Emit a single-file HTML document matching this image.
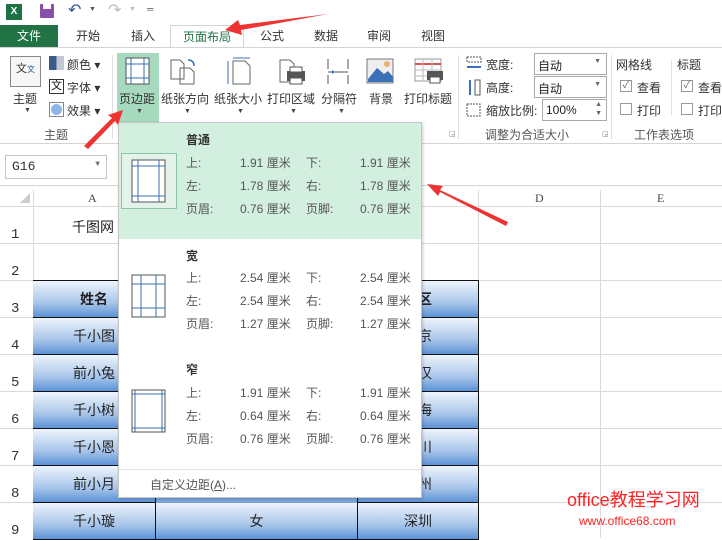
<!DOCTYPE html>
<html><head><meta charset="utf-8"><style>
*{margin:0;padding:0;box-sizing:border-box}
body{width:722px;height:538px;overflow:hidden;background:#fff;font-family:"Liberation Sans","Noto Sans CJK SC",sans-serif;font-size:12px;color:#444;position:relative}
.a{position:absolute;white-space:nowrap}
.tab{position:absolute;top:25px;height:23px;line-height:23px;font-size:12px;color:#333;text-align:center}
.lbl{font-size:12px;color:#333}
.cell{position:absolute;height:37px;border-right:1px solid #111;border-bottom:1px solid #111;background:linear-gradient(#eef4fc,#a9c6ea 60%,#5d92d6);font-size:14px;color:#222;text-align:center;line-height:36px}
.rn{position:absolute;left:0;width:33px;text-align:left;padding-left:11px;font-size:14px;color:#333;font-family:"Liberation Mono",monospace}
.hl{position:absolute;left:0;width:722px;height:1px;background:#dadada}
.vl{position:absolute;top:190px;width:1px;height:348px;background:#dadada}
.dd td{font-size:12px;color:#555}
.m{position:absolute;font-size:12px;color:#555}
</style></head><body>
<!-- title bar -->
<div class="a" style="left:6px;top:4px;width:16px;height:16px;background:#1e7145;color:#fff;font-size:10px;font-weight:bold;line-height:16px;text-align:center">X</div>
<div class="a" style="left:40px;top:4px;width:14px;height:14px;background:#8a4fa8;border-radius:1px"></div>
<div class="a" style="left:43px;top:4px;width:8px;height:5px;background:#fff"></div>
<div class="a" style="left:68px;top:0px;font-size:16px;color:#2b5797">↶</div><div class="a" style="left:89px;top:6px;font-size:7px;color:#555">▼</div>
<div class="a" style="left:108px;top:0px;font-size:16px;color:#bbb">↷</div><div class="a" style="left:129px;top:6px;font-size:7px;color:#bbb">▼</div>
<div class="a" style="left:147px;top:4px;font-size:9px;color:#555">═</div>
<!-- tabs -->
<div class="tab" style="left:0;width:58px;background:#217346;color:#fff">文件</div>
<div class="tab" style="left:72px;width:32px">开始</div>
<div class="tab" style="left:127px;width:32px">插入</div>
<div class="tab" style="left:170px;width:74px;top:25px;height:23px;border:1px solid #d4d4d4;border-bottom:none;background:#fff;color:#217346">页面布局</div>
<div class="tab" style="left:256px;width:32px">公式</div>
<div class="tab" style="left:310px;width:32px">数据</div>
<div class="tab" style="left:363px;width:32px">审阅</div>
<div class="tab" style="left:417px;width:32px">视图</div>
<div class="a" style="left:0;top:47px;width:722px;height:1px;background:#d4d4d4"></div>
<div class="a" style="left:0;top:47px;width:170px;height:1px;background:#d4d4d4"></div>
<!-- ribbon -->
<div class="a" style="left:10px;top:56px;width:31px;height:31px;border:1px solid #888;background:#f6f6f6;font-size:11px;text-align:center;line-height:24px;color:#333">文<span style="font-size:8px;color:#2b5797">文</span></div>
<div class="a lbl" style="left:13px;top:90px">主题</div><div class="a" style="left:24px;top:107px;font-size:7px">▼</div>
<div class="a" style="left:49px;top:56px;width:15px;height:14px;background:linear-gradient(90deg,#3a5a8a 50%,#c1c8d1 50%)"></div>
<div class="a lbl" style="left:67px;top:56px">颜色 ▾</div>
<div class="a" style="left:49px;top:79px;width:15px;height:15px;border:1px solid #333;font-size:11px;line-height:13px;text-align:center;color:#111">文</div>
<div class="a lbl" style="left:67px;top:79px">字体 ▾</div>
<div class="a" style="left:49px;top:102px;width:15px;height:15px;border:1px solid #888;background:#fff"><div style="margin:1px;width:11px;height:11px;border-radius:50%;background:#8fb6e8"></div></div>
<div class="a lbl" style="left:67px;top:102px">效果 ▾</div>
<div class="a lbl" style="left:44px;top:126px;color:#555">主题</div>
<div class="a" style="left:112px;top:55px;width:1px;height:84px;background:#e0e0e0"></div>
<div class="a" style="left:117px;top:53px;width:42px;height:69px;background:#a6d9bd"></div>
<svg class="a" style="left:124px;top:57px" width="28" height="28"><rect x="2" y="1" width="23" height="26" fill="#fff" stroke="#555"/><path d="M7 1V27M20 1V27M2 7H25M2 21H25" stroke="#3b6fb6"/></svg>
<div class="a lbl" style="left:119px;top:90px">页边距</div><div class="a" style="left:136px;top:108px;font-size:7px">▼</div>
<svg class="a" style="left:168px;top:57px" width="32" height="28"><path d="M3 3H12L16 7V22H3Z M12 11H22L26 15V27H12Z" fill="#fff" stroke="#666"/><path d="M20 3Q26 3 26 9" stroke="#3b6fb6" fill="none" stroke-width="1.5"/></svg>
<div class="a lbl" style="left:161px;top:90px">纸张方向</div><div class="a" style="left:184px;top:108px;font-size:7px">▼</div>
<svg class="a" style="left:225px;top:57px" width="28" height="28"><path d="M8 4H20L25 9V27H8Z" fill="#fff" stroke="#666"/><path d="M3 4V27M8 1H25" stroke="#3b6fb6"/></svg>
<div class="a lbl" style="left:214px;top:90px">纸张大小</div><div class="a" style="left:237px;top:108px;font-size:7px">▼</div>
<svg class="a" style="left:277px;top:57px" width="30" height="28"><path d="M3 3H13L17 7V25H3Z" fill="#fff" stroke="#666"/><rect x="10" y="14" width="18" height="10" fill="#555"/><rect x="13" y="10" width="12" height="5" fill="#fff" stroke="#555"/><rect x="13" y="21" width="12" height="6" fill="#fff" stroke="#555"/></svg>
<div class="a lbl" style="left:267px;top:90px">打印区域</div><div class="a" style="left:290px;top:108px;font-size:7px">▼</div>
<svg class="a" style="left:324px;top:57px" width="28" height="28"><path d="M4 2V12M24 2V12M4 18V27M24 18V27M4 15H24" stroke="#555"/><path d="M8 13L11 15L8 17Z" fill="#3b6fb6"/></svg>
<div class="a lbl" style="left:321px;top:90px">分隔符</div><div class="a" style="left:338px;top:108px;font-size:7px">▼</div>
<svg class="a" style="left:366px;top:57px" width="28" height="28"><rect x="1" y="2" width="26" height="24" fill="#eee" stroke="#777"/><path d="M2 22L11 11L18 17L22 14L27 20V25H2Z" fill="#3b6fb6"/><circle cx="21" cy="7" r="3" fill="#e8b36b"/></svg>
<div class="a lbl" style="left:369px;top:90px">背景</div>
<svg class="a" style="left:413px;top:57px" width="32" height="28"><rect x="2" y="2" width="26" height="22" fill="#fff" stroke="#999"/><path d="M2 7H28" stroke="#d9534f" stroke-width="2"/><path d="M10 2V24M19 2V24M2 13H28M2 19H28" stroke="#bbb"/><rect x="14" y="14" width="16" height="9" fill="#555"/><rect x="17" y="20" width="10" height="6" fill="#fff" stroke="#555"/></svg>
<div class="a lbl" style="left:404px;top:90px">打印标题</div>
<div class="a" style="left:449px;top:130px;font-size:7px;color:#777">◲</div>
<div class="a" style="left:458px;top:55px;width:1px;height:84px;background:#e0e0e0"></div>
<svg class="a" style="left:466px;top:56px" width="16" height="16"><rect x="1" y="1" width="14" height="5" fill="#fff" stroke="#555" stroke-dasharray="2 1"/><path d="M1 11H15" stroke="#3b6fb6" stroke-width="2"/></svg>
<div class="a lbl" style="left:486px;top:56px">宽度:</div>
<svg class="a" style="left:466px;top:79px" width="16" height="17"><rect x="9" y="1" width="5" height="15" fill="#fff" stroke="#555"/><path d="M4 1V16" stroke="#3b6fb6" stroke-width="2"/></svg>
<div class="a lbl" style="left:486px;top:79px">高度:</div>
<svg class="a" style="left:466px;top:103px" width="16" height="14"><rect x="1" y="1" width="13" height="12" fill="#fff" stroke="#555" stroke-dasharray="2 1"/></svg>
<div class="a lbl" style="left:486px;top:102px">缩放比例:</div>
<div class="a" style="left:534px;top:53px;width:73px;height:22px;border:1px solid #aaa;font-size:12px;color:#222;padding:3px 3px">自动<span style="position:absolute;right:5px;top:4px;font-size:7px;color:#666">▼</span></div>
<div class="a" style="left:534px;top:76px;width:73px;height:22px;border:1px solid #aaa;font-size:12px;color:#222;padding:3px 3px">自动<span style="position:absolute;right:5px;top:4px;font-size:7px;color:#666">▼</span></div>
<div class="a" style="left:542px;top:99px;width:65px;height:22px;border:1px solid #aaa;font-size:12px;color:#222;padding:3px 3px">100%<span style="position:absolute;right:4px;top:0px;font-size:7px;color:#666;line-height:9px">▲<br>▼</span></div>
<div class="a lbl" style="left:485px;top:126px;color:#555">调整为合适大小</div>
<div class="a" style="left:602px;top:130px;font-size:7px;color:#777">◲</div>
<div class="a" style="left:611px;top:55px;width:1px;height:84px;background:#e0e0e0"></div>
<div class="a lbl" style="left:616px;top:56px">网格线</div>
<div class="a" style="left:620px;top:80px;width:12px;height:12px;border:1px solid #999;font-size:10px;line-height:10px;color:#666;text-align:center">✓</div>
<div class="a lbl" style="left:637px;top:79px">查看</div>
<div class="a" style="left:620px;top:103px;width:12px;height:12px;border:1px solid #999"></div>
<div class="a lbl" style="left:637px;top:102px">打印</div>
<div class="a" style="left:671px;top:60px;width:1px;height:55px;background:#e0e0e0"></div>
<div class="a lbl" style="left:677px;top:56px">标题</div>
<div class="a" style="left:681px;top:80px;width:12px;height:12px;border:1px solid #999;font-size:10px;line-height:10px;color:#666;text-align:center">✓</div>
<div class="a lbl" style="left:698px;top:79px">查看</div>
<div class="a" style="left:681px;top:103px;width:12px;height:12px;border:1px solid #999"></div>
<div class="a lbl" style="left:698px;top:102px">打印</div>
<div class="a lbl" style="left:634px;top:126px;color:#555">工作表选项</div>
<div class="a" style="left:0;top:143px;width:722px;height:1px;background:#d4d4d4"></div>
<!-- formula bar -->
<div class="a" style="left:5px;top:155px;width:102px;height:24px;border:1px solid #c6c6c6;font-family:'Liberation Mono',monospace;font-size:13px;color:#333;padding:3px 6px">G16<span style="position:absolute;right:6px;top:4px;font-size:8px;color:#777">▼</span></div>
<div class="a" style="left:0;top:185px;width:722px;height:1px;background:#d4d4d4"></div>
<!-- grid -->
<div class="a" style="left:0;top:190px;width:722px;height:17px;background:#fff"></div>
<div class="a" style="left:20px;top:193px;width:0;height:0;border-left:10px solid transparent;border-bottom:10px solid #ccc"></div>
<div class="a" style="left:88px;top:191px;font-size:12px;font-family:'Liberation Serif',serif">A</div>
<div class="a" style="left:535px;top:191px;font-size:12px;font-family:'Liberation Serif',serif">D</div>
<div class="a" style="left:657px;top:191px;font-size:12px;font-family:'Liberation Serif',serif">E</div>
<div class="vl" style="left:33px"></div><div class="vl" style="left:478px"></div><div class="vl" style="left:600px"></div>
<div class="hl" style="top:206px"></div><div class="hl" style="top:243px"></div><div class="hl" style="top:280px"></div><div class="hl" style="top:317px"></div><div class="hl" style="top:354px"></div><div class="hl" style="top:391px"></div><div class="hl" style="top:428px"></div><div class="hl" style="top:465px"></div><div class="hl" style="top:502px"></div>
<div class="rn" style="top:227px">1</div><div class="rn" style="top:264px">2</div><div class="rn" style="top:301px">3</div><div class="rn" style="top:338px">4</div><div class="rn" style="top:375px">5</div><div class="rn" style="top:412px">6</div><div class="rn" style="top:449px">7</div><div class="rn" style="top:486px">8</div><div class="rn" style="top:523px">9</div>
<div class="a" style="left:72px;top:217px;font-size:14px;color:#222">千图网</div>
<div class="a" style="left:33px;top:280px;width:446px;height:1px;background:#111"></div>
<div class="cell" style="left:33px;top:281px;width:123px;font-weight:bold">姓名</div>
<div class="cell" style="left:33px;top:318px;width:123px">千小图</div>
<div class="cell" style="left:33px;top:355px;width:123px">前小兔</div>
<div class="cell" style="left:33px;top:392px;width:123px">千小树</div>
<div class="cell" style="left:33px;top:429px;width:123px">千小恩</div>
<div class="cell" style="left:33px;top:466px;width:123px">前小月</div>
<div class="cell" style="left:33px;top:503px;width:123px">千小璇</div>
<div class="cell" style="left:156px;top:281px;width:202px;height:259px"></div>
<div class="cell" style="left:156px;top:503px;width:202px">女</div>
<div class="cell" style="left:358px;top:281px;width:121px;font-weight:bold">地区</div>
<div class="cell" style="left:358px;top:318px;width:121px">北京</div>
<div class="cell" style="left:358px;top:355px;width:121px">武汉</div>
<div class="cell" style="left:358px;top:392px;width:121px">上海</div>
<div class="cell" style="left:358px;top:429px;width:121px">四川</div>
<div class="cell" style="left:358px;top:466px;width:121px">广州</div>
<div class="cell" style="left:358px;top:503px;width:121px">深圳</div>
<!-- dropdown -->
<div class="a" style="left:118px;top:122px;width:304px;height:376px;background:#fff;border:1px solid #c6c6c6;box-shadow:1px 1px 3px rgba(0,0,0,.2)"></div>
<div class="a" style="left:119px;top:123px;width:302px;height:116px;background:#d3efdf"></div>
<div class="a" style="left:121px;top:153px;width:56px;height:56px;border:1px solid #8cc5a3;background:#e4f3ea"></div>
<svg class="a" style="left:131px;top:159px" width="36" height="46"><rect x="1" y="1" width="33" height="42" fill="#fff" stroke="#555"/><path d="M7 1V43M28 1V43M1 7H34M1 37H34" stroke="#3b6fb6"/></svg>
<svg class="a" style="left:131px;top:274px" width="36" height="46"><rect x="1" y="1" width="33" height="42" fill="#fff" stroke="#555"/><path d="M10 1V43M25 1V43M1 10H34M1 34H34" stroke="#3b6fb6"/></svg>
<svg class="a" style="left:131px;top:389px" width="36" height="46"><rect x="1" y="1" width="33" height="42" fill="#fff" stroke="#555"/><path d="M4 1V43M31 1V43M1 5H34M1 39H34" stroke="#3b6fb6"/></svg>
<div class="m" style="left:186px;top:131px;color:#333;font-weight:bold">普通</div>
<div class="m" style="left:186px;top:247px;color:#333;font-weight:bold">宽</div>
<div class="m" style="left:186px;top:361px;color:#333;font-weight:bold">窄</div>
<div class="m" style="left:186px;top:154px">上:</div><div class="m" style="left:240px;top:154px">1.91 厘米</div><div class="m" style="left:306px;top:154px">下:</div><div class="m" style="left:360px;top:154px">1.91 厘米</div>
<div class="m" style="left:186px;top:177px">左:</div><div class="m" style="left:240px;top:177px">1.78 厘米</div><div class="m" style="left:306px;top:177px">右:</div><div class="m" style="left:360px;top:177px">1.78 厘米</div>
<div class="m" style="left:186px;top:200px">页眉:</div><div class="m" style="left:240px;top:200px">0.76 厘米</div><div class="m" style="left:306px;top:200px">页脚:</div><div class="m" style="left:360px;top:200px">0.76 厘米</div>
<div class="m" style="left:186px;top:269px">上:</div><div class="m" style="left:240px;top:269px">2.54 厘米</div><div class="m" style="left:306px;top:269px">下:</div><div class="m" style="left:360px;top:269px">2.54 厘米</div>
<div class="m" style="left:186px;top:292px">左:</div><div class="m" style="left:240px;top:292px">2.54 厘米</div><div class="m" style="left:306px;top:292px">右:</div><div class="m" style="left:360px;top:292px">2.54 厘米</div>
<div class="m" style="left:186px;top:315px">页眉:</div><div class="m" style="left:240px;top:315px">1.27 厘米</div><div class="m" style="left:306px;top:315px">页脚:</div><div class="m" style="left:360px;top:315px">1.27 厘米</div>
<div class="m" style="left:186px;top:384px">上:</div><div class="m" style="left:240px;top:384px">1.91 厘米</div><div class="m" style="left:306px;top:384px">下:</div><div class="m" style="left:360px;top:384px">1.91 厘米</div>
<div class="m" style="left:186px;top:407px">左:</div><div class="m" style="left:240px;top:407px">0.64 厘米</div><div class="m" style="left:306px;top:407px">右:</div><div class="m" style="left:360px;top:407px">0.64 厘米</div>
<div class="m" style="left:186px;top:430px">页眉:</div><div class="m" style="left:240px;top:430px">0.76 厘米</div><div class="m" style="left:306px;top:430px">页脚:</div><div class="m" style="left:360px;top:430px">0.76 厘米</div>
<div class="a" style="left:119px;top:469px;width:302px;height:1px;background:#e2e2e2"></div>
<div class="m" style="left:150px;top:476px">自定义边距(<u>A</u>)...</div>
<!-- arrows -->
<svg class="a" style="left:0;top:0" width="722" height="538">
<path d="M328 14L240 25L238 20L225 30L242 35L241 30Z" fill="#ee3333"/>
<path d="M84 146L112 118L108 115L123 110L118 125L115 121L88 149Z" fill="#ee3333"/>
<path d="M508 222L440 190L443 186L427 184L438 196L440 192L506 226Z" fill="#ee3333"/>
</svg>
<div class="a" style="left:567px;top:489px;font-size:18px;color:#f22;line-height:22px">office教程学习网</div>
<div class="a" style="left:579px;top:514px;font-size:12px;color:#f22">www.office68.com</div>
</body></html>
